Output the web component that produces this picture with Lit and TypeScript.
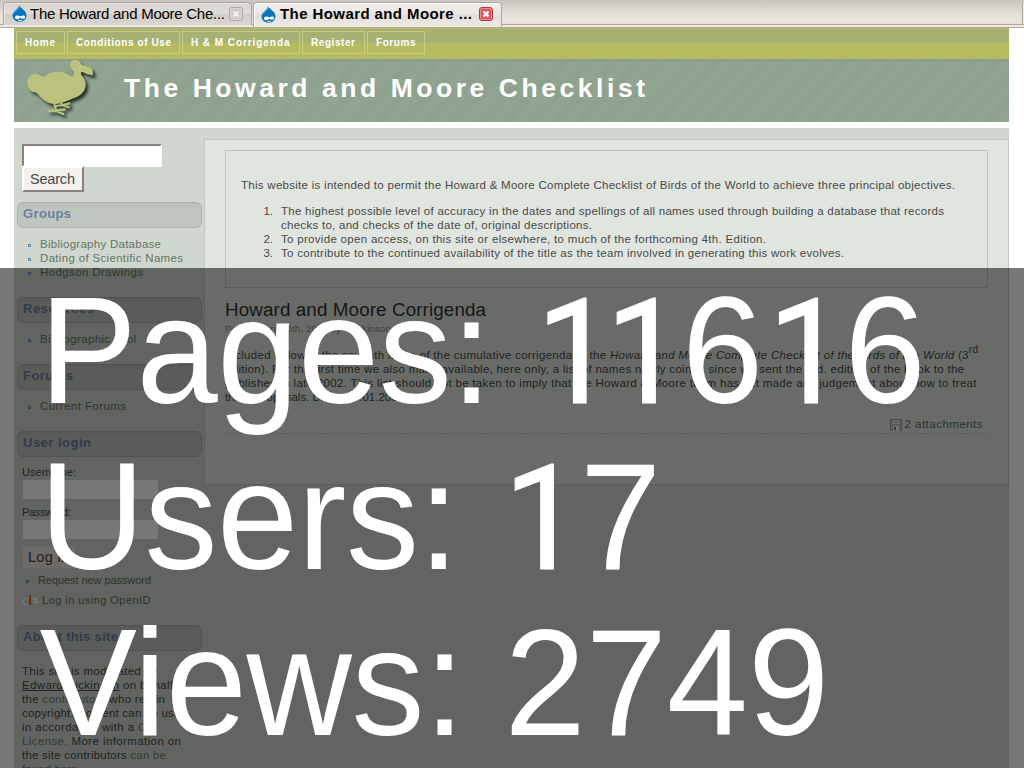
import { LitElement, html, css, svg } from "lit";
import { customElement, property } from "lit/decorators.js";

// A single line of text tracked out to an exact measure.
@customElement("fit-line")
export class FitLine extends LitElement {
  @property({ type: Number }) w = 0;
  static styles = css`
    :host { display: block; width: max-content; white-space: nowrap; }
  `;
  render() { return html`<slot></slot>`; }
  firstUpdated() {
    const n = (this.textContent ?? "").length;
    const natural = this.getBoundingClientRect().width;
    if (n > 1 && this.w) this.style.letterSpacing = `${(this.w - natural) / (n - 1)}px`;
  }
}

const drop = html`<svg class="drop" viewBox="0 0 15 17" width="15" height="17">
  <path d="M7 .5C8 3 14.500 5 14.500 10.500A7 6.300 0 0 1 .5 10.500C.5 6 6 4.500 7 .5Z" fill="#0b74bd"/>
  <path d="M7 1C7.500 4 3 5 1.500 8.500" stroke="#6cb7e4" stroke-width="1" fill="none"/>
  <path d="M3 12.500C3 10 6 9.800 8.500 11.600C10.500 10 13 10 13 12.300C13 14.200 10.500 14 8.500 12.800C6.500 14.600 3 14.800 3 12.500Z" fill="#fff"/>
  <path d="M6 15.200q2 1 4 0" stroke="#fff" fill="none"/>
</svg>`;

const close = (on: boolean) => html`<svg class="close" viewBox="0 0 14 14" width="14" height="14">
  <rect x=".5" y=".5" width="13" height="13" rx="2.500" fill=${on ? "#dc5560" : "#cfccc8"} stroke=${on ? "#a83c3c" : "#aaa7a3"}/>
  <rect x="1.500" y="1.500" width="11" height="11" rx="1.500" fill="none" stroke=${on ? "#ee8c90" : "#d8d6d2"}/>
  <path d="M4.500 4.500L9.500 9.500M9.500 4.500L4.500 9.500" stroke=${on ? "#fff" : "#f2f1ef"} stroke-width="2.300"/>
</svg>`;

const birdShape = svg`
  <path d="M82 172C84 152 98 145 110 147C122 149 126 156 134 154C148 142 162 140 178 140C194 141 205 148 213 154C222 156 224 147 220 139C208 128 207 112 219 106C230 101 240 107 244 118C250 123 264 123 273 130C279 136 280 143 278 152C271 148 262 149 254 144C246 139 241 141 243 147C248 157 259 165 257 182C255 200 240 213 222 219C205 226 193 233 172 236C150 239 139 231 127 221C117 213 112 201 101 201C91 200 82 189 82 172Z" stroke-width="0"/>
  <path d="M162 233L168 254M181 230L187 240" stroke-width="6"/>
  <path d="M146 258L168 257L194 253M168 258L190 267M166 243L188 240L208 235M188 241L206 247" stroke-width="6.500" fill="none" stroke-linecap="round" stroke-linejoin="round"/>`;

const bird = html`<svg class="bird" viewBox="72 102 222 189" width="74" height="63">
  <defs><filter id="soft" x="-20%" y="-20%" width="140%" height="140%"><feGaussianBlur stdDeviation="5"/></filter></defs>
  <g transform="translate(8 9)" fill="#28352c" stroke="#28352c" filter="url(#soft)">${birdShape}</g>
  <g fill="#bac27e" stroke="#bac27e">${birdShape}</g>
</svg>`;

const floppy = html`<svg viewBox="0 0 12 12" width="12" height="12">
  <path d="M.5 .5H11.500V11.500H1.500L.5 10.500Z" fill="#c4c4c4" stroke="#9a9a9a"/>
  <rect x="2" y="1" width="8" height="4" fill="#e4e4e4"/><path d="M2.500 3H9.500" stroke="#b5b5b5"/>
  <rect x="3" y="7" width="6" height="5" fill="#f2f2f2"/><rect x="4" y="8" width="2" height="3" fill="#777"/>
</svg>`;

const openid = html`<svg viewBox="0 0 16 13" width="16" height="13">
  <path d="M7 4C3 4 .8 5.500 .8 7.500C.8 9.500 3 11 7 11M9 4.200C11 4.400 12 5 13 5.500L15 4.500V8.500L11 7.500" fill="none" stroke="#fff" stroke-width="1.400"/>
  <path d="M8 1V11" stroke="#e4661c" stroke-width="2.200"/>
</svg>`;

@customElement("app-root")
export class AppRoot extends LitElement {
  static styles = css`
    * { box-sizing: border-box; }
    :host {
      display: block; position: relative; width: 1024px; height: 768px; overflow: hidden;
      background: #fff; font-family: "Liberation Sans", Arial, sans-serif;
      font-size: 11.5px; line-height: 14px; color: #484848;
    }
    svg { display: block; flex: none; }
    .tabs {
      height: 28px; display: flex; align-items: flex-end; padding: 0 0 1px 3px; gap: 1px;
      background: linear-gradient(#b7a593, #b7a593) 0 24px / 100% 1px no-repeat,
        linear-gradient(#b7a593, #b7a593) 0 27px / 100% 1px no-repeat,
        linear-gradient(#f0ebe4, #f0ebe4) 0 25px / 100% 2px no-repeat,
        linear-gradient(#c8c5bf, #e3dfd9 14px, #e8e4de 22px, #e0dcd6 24px);
      color: #000;
    }
    .tab { display: flex; align-items: center; border: 1px solid #aaa69f; border-bottom: 0; border-radius: 4px 4px 0 0; font-size: 15px; line-height: 17px; }
    .tab.idle { width: 249px; height: 23px; margin-bottom: 2px; padding: 0 8px 1px 8px; background: linear-gradient(#d9d6d1, #dedad5 50%, #d1cdc7 51%, #dad6d0); box-shadow: inset 1px 1px #e8e6e2; }
    .tab.live { width: 249px; height: 25px; padding: 0 8px 2px 7px; font-weight: 700; background: linear-gradient(#f0eeeb, #eae7e3 50%, #e2deda 51%, #eeeae4); box-shadow: inset 1px 1px #fff; }
    .tab fit-line { margin: 0 0 1px 3px; }
    .tab.live fit-line { margin-left: 4px; }
    .close { margin-left: auto; }
    .stub { width: 2px; height: 22px; margin: 0 0 3px auto; border-left: 1px solid #aaa69f; background: #eee; }
    .page { width: 995px; margin-left: 14px; }
    nav { height: 31px; display: flex; gap: 2px; padding: 3px 2px; background: linear-gradient(#b5bb60 1px, #a8b174 1px, #a8b174 15px, #b5bb60 15px); }
    nav a { height: 23px; border: 1px solid #c8cd81; color: #fff; font-size: 10px; font-weight: 700; line-height: 21px; padding-left: 8px; }
    .home { width: 49px; } .cond { width: 113px; } .corr { width: 118px; } .reg { width: 63px; } .for { width: 58px; }
    header {
      height: 63px; display: flex; align-items: center; padding-left: 10px; color: #fff;
      background: linear-gradient(#869a88, rgba(144,163,144,0) 3px),
        repeating-linear-gradient(135deg, #91a492 0 8px, #8ea18f 10px 16px, #91a492 18px);
    }
    header fit-line { margin: 0 0 6px 26px; font-size: 26.500px; line-height: 30px; font-weight: 700; }
    .main { margin-top: 6px; height: 640px; display: flex; align-items: flex-start; background: #d0d7cf; }
    aside { width: 190px; padding: 16px 2px 0 3px; }
    .field { width: 140px; height: 23px; margin-left: 5px; background: #fff; border: 2px solid #fff; border-top-color: #86827e; border-left-color: #86827e; }
    .search { width: 62px; height: 26px; margin: -1px 0 10px 5px; padding: 2px 0 0 6px; border: 2px solid #86827e; border-top-color: #fff; border-left-color: #fff; background: #f3f1ee; font-size: 14.500px; line-height: 18px; }
    h2 { margin: 0; width: 185px; height: 26px; border: 1px solid #acb3ad; border-radius: 6px; background: linear-gradient(#b9c0ba, #bec5bf 5px, #bfc6c0); padding: 3px 0 0 5px; font-size: 13px; line-height: 16px; font-weight: 700; color: #6e7e9c; }
    ul { list-style: none; margin: 9px 0 18px; padding: 0 0 0 11px; color: #667466; }
    .dot { display: flex; align-items: center; height: 14px; gap: 9px; }
    .dot::before { content: ""; width: 1px; height: 1px; border: 1px solid #6089b0; margin-top: 2px; }
    .form { padding: 8px 0 0 5px; font-size: 11px; }
    .box { width: 137px; height: 21px; background: #fff; border: 1px solid #d0d0e0; margin-bottom: 5px; }
    .box.second { margin-bottom: 6px; }
    .login { width: 54px; height: 23px; border: 1px solid #d6d3dc; background: #ebe4df; padding-left: 5px; font-size: 14.500px; line-height: 21px; }
    .req { margin: 4px 0 0 4px; color: #606e60; }
    .oid { display: flex; align-items: center; gap: 4px; height: 14px; margin: 6px 0 18px; color: #606e60; }
    .about { padding: 13px 0 0 5px; }
    .about i { font-style: normal; color: #728072; }
    article { width: 805px; height: 346px; margin-top: 11px; border: 1px solid #c0c8c0; background: #e0e5df; padding: 10px 20px; }
    .intro { width: 763px; height: 138px; border: 1px solid #bec5be; padding: 27px 15px 0; }
    ol { margin: 12px 0 0; padding: 0; list-style: none; }
    ol li { display: flex; }
    ol li b { width: 32px; margin-right: 8px; text-align: right; font-weight: 400; }
    h1 { margin: 11px 0 0; font-size: 18.800px; line-height: 22px; font-weight: 400; color: #333; }
    .by { margin-top: 1px; font-size: 9.800px; line-height: 14px; color: #858a85; }
    .body { margin-top: 12px; }
    .body fit-line { height: 14px; }
    sup { font-size: 10px; line-height: 0; vertical-align: 6px; }
    .att { width: 763px; height: 17px; margin-top: 13px; padding-right: 5px; border-bottom: 1px dashed #c0c8c0; display: flex; justify-content: flex-end; align-items: flex-start; gap: 3px; color: #606e64; }
    .att svg { margin-top: 2px; }
    .stats { position: absolute; left: 0; top: 268px; width: 1024px; height: 500px; padding-top: 2px; background: rgba(0,0,0,.535); color: #fff; }
    .stats div { display: flex; align-items: baseline; height: 166px; padding-left: 39.500px; font-size: 146px; line-height: 166px; white-space: pre; transform: scaleY(1.045); transform-origin: 0 133.600px; }
    .label { letter-spacing: -.43px; }
    .d { width: 81.200px; flex: none; }
    .one { font-family: Roboto, "Liberation Sans", sans-serif; font-size: 140px; padding-left: 4.600px; -webkit-text-stroke: 1px #fff; }
    .kern { width: 69.300px; }
  `;

  block(title: string, w: number, items: [string, number][]) {
    return html`<h2><fit-line w=${w}>${title}</fit-line></h2>
      <ul>${items.map(([t, n]) => html`<li class="dot"><fit-line w=${n}>${t}</fit-line></li>`)}</ul>`;
  }

  stat(label: string, value: string) {
    const digits = [...value].map((c, i) => {
      const kind = c === "1" ? (value[i + 1] === "1" ? "d one kern" : "d one") : "d";
      return html`<span class=${kind}>${c}</span>`;
    });
    return html`<div><span class="label">${label + ": "}</span>${digits}</div>`;
  }

  render() {
    return html`
      <div class="tabs">
        <div class="tab idle">${drop}<fit-line w="195">The Howard and Moore Che...</fit-line>${close(false)}</div>
        <div class="tab live">${drop}<fit-line w="192">The Howard and Moore ...</fit-line>${close(true)}</div>
        <div class="stub"></div>
      </div>
      <div class="page">
        <nav>
          <a class="home"><fit-line w="30">Home</fit-line></a>
          <a class="cond"><fit-line w="95">Conditions of Use</fit-line></a>
          <a class="corr"><fit-line w="98.5">H &amp; M Corrigenda</fit-line></a>
          <a class="reg"><fit-line w="44">Register</fit-line></a>
          <a class="for"><fit-line w="39.5">Forums</fit-line></a>
        </nav>
        <header>${bird}<fit-line w="521">The Howard and Moore Checklist</fit-line></header>
        <div class="main">
          <aside>
            <div class="field"></div>
            <div class="search"><fit-line w="45">Search</fit-line></div>
            ${this.block("Groups", 48, [["Bibliography Database", 121], ["Dating of Scientific Names", 143], ["Hodgson Drawings", 103]])}
            ${this.block("Resources", 71, [["Bibliographic Tool", 96]])}
            ${this.block("Forums", 50, [["Current Forums", 86]])}
            <h2><fit-line w="68">User login</fit-line></h2>
            <div class="form">
              <fit-line w="54">Username:</fit-line><div class="box"></div>
              <fit-line w="49">Password:</fit-line><div class="box second"></div>
              <div class="login"><fit-line w="41">Log in</fit-line></div>
              <div class="req dot"><fit-line w="113">Request new password</fit-line></div>
              <div class="oid">${openid}<fit-line w="108.5">Log in using OpenID</fit-line></div>
            </div>
            <h2><fit-line w="95">About this site</fit-line></h2>
            <div class="about">
              <fit-line w="135">This site is moderated by</fit-line>
              <fit-line w="165"><u>Edward Dickinson</u> on behalf of</fit-line>
              <fit-line w="143">the <i>contributors</i> who retain</fit-line>
              <fit-line w="165">copyright. Content can be used</fit-line>
              <fit-line w="133">in accordance with a <i>CC</i></fit-line>
              <fit-line w="159"><i>License.</i> More information on</fit-line>
              <fit-line w="144">the site contributors <i>can be</i></fit-line>
              <fit-line w="59"><i>found here.</i></fit-line>
            </div>
          </aside>
          <article>
            <div class="intro">
              <fit-line w="714">This website is intended to permit the Howard &amp; Moore Complete Checklist of Birds of the World to achieve three principal objectives.</fit-line>
              <ol>
                <li><b>1.</b><div><fit-line w="663">The highest possible level of accuracy in the dates and spellings of all names used through building a database that records</fit-line><fit-line w="311">checks to, and checks of the date of, original descriptions.</fit-line></div></li>
                <li><b>2.</b><fit-line w="485">To provide open access, on this site or elsewhere, to much of the forthcoming 4th. Edition.</fit-line></li>
                <li><b>3.</b><fit-line w="563">To contribute to the continued availability of the title as the team involved in generating this work evolves.</fit-line></li>
              </ol>
            </div>
            <h1><fit-line w="261">Howard and Moore Corrigenda</fit-line></h1>
            <div class="by"><fit-line w="166">Posted April 20th, 2007 by edickinson</fit-line></div>
            <div class="body">
              <fit-line w="753">Included below is the seventh issue of the cumulative corrigenda of the <em>Howard and Moore Complete Checklist of the Birds of the World</em> (3<sup>rd</sup></fit-line>
              <fit-line w="739">edition). For the first time we also make available, here only, a list of names newly coined since we sent the 3rd. edition of the book to the</fit-line>
              <fit-line w="751.5">published in late 2002. This list should not be taken to imply that the Howard &amp; Moore team has yet made any judgement about how to treat</fit-line>
              <fit-line w="179">these proposals. Dated 07.01.2007</fit-line>
            </div>
            <div class="att">${floppy}<fit-line w="78">2 attachments</fit-line></div>
          </article>
        </div>
      </div>
      <div class="stats">${this.stat("Pages", "11616")}${this.stat("Users", "17")}${this.stat("Views", "2749")}</div>
    `;
  }
}
